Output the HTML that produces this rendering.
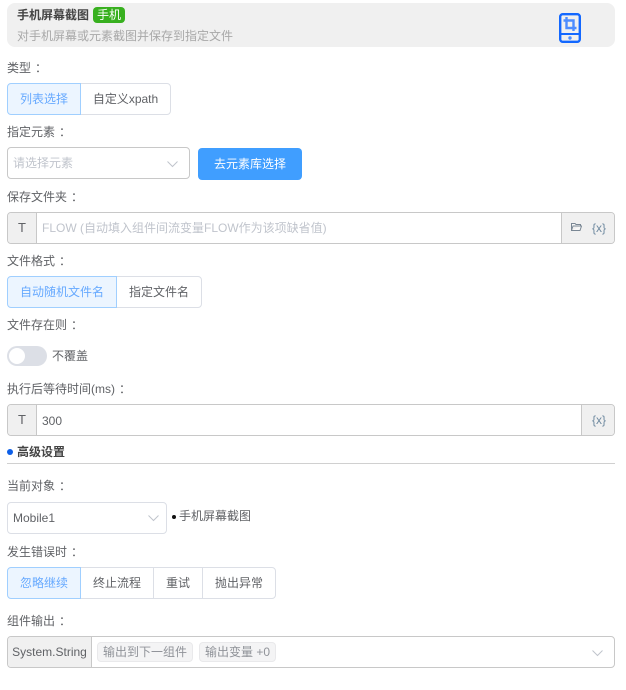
<!DOCTYPE html>
<html lang="zh-CN">
<head>
<meta charset="utf-8">
<style>
html,body{margin:0;padding:0;background:#fff;}
body{width:626px;height:690px;position:relative;overflow:hidden;font-family:"Liberation Sans","Noto Sans CJK SC",sans-serif;font-size:12px;color:#606266;}
.a{position:absolute;box-sizing:border-box;white-space:nowrap;}
.l{position:absolute;left:7px;height:16px;line-height:16px;color:#606266;white-space:nowrap;}
.c{position:relative;left:4px;}
.b{position:absolute;box-sizing:border-box;height:32px;line-height:30px;text-align:center;border:1px solid #dcdfe6;background:#fff;color:#606266;}
.on{background:#ecf5ff;border:1px solid #a0cfff;color:#66a9ff;}
.box{position:absolute;box-sizing:border-box;height:32px;border:1px solid #c8c8c8;border-radius:4px;background:#fff;left:7px;width:608px;overflow:hidden;}
.seg{position:absolute;top:0;height:30px;background:#f0f0f0;line-height:28px;text-align:center;box-sizing:border-box;color:#606266;}
.t{font-size:13px;line-height:29px;font-weight:normal;}
.x{font-size:12px;color:#6f8aa0;}
.sel{position:absolute;box-sizing:border-box;height:32px;border:1px solid #dcdfe6;border-radius:4px;background:#fff;line-height:30px;padding-left:5px;}
.tag{position:absolute;box-sizing:border-box;top:642px;height:20px;line-height:18px;background:#f4f4f5;border:1px solid #e9e9eb;border-radius:4px;color:#909399;text-align:center;}
</style>
</head>
<body>
<div class="a" style="left:7px;top:3px;width:608px;height:44px;background:#f0f0f0;border-radius:8px;"></div>
<div class="a" style="left:17px;top:7px;height:16px;line-height:16px;font-weight:bold;color:#444;">手机屏幕截图</div>
<div class="a" style="left:93px;top:7px;width:32px;height:16px;line-height:16px;background:#38b01f;color:#fff;border-radius:4px;text-align:center;">手机</div>
<div class="a" style="left:17px;top:28px;height:16px;line-height:16px;color:#a8a8a8;">对手机屏幕或元素截图并保存到指定文件</div>
<svg class="a" style="left:559px;top:13px;" width="22" height="30" viewBox="0 0 22 30" fill="none">
<rect x="1.2" y="1.2" width="19.6" height="27.6" rx="2.5" stroke="#1368ff" stroke-width="2.4"/>
<path d="M1 21H21" stroke="#1368ff" stroke-width="2"/>
<circle cx="11" cy="25" r="1.7" fill="#4d8dff"/>
<path d="M7.5 4V15H17.5M4.5 7.5H14.5V18" stroke="#4d8dff" stroke-width="2.4"/>
</svg>

<div class="l" style="top:60px;">类型<span class="c">：</span></div>
<div class="b" style="left:80px;top:83px;width:91px;border-radius:0 4px 4px 0;">自定义xpath</div>
<div class="b on" style="left:7px;top:83px;width:74px;border-radius:4px 0 0 4px;">列表选择</div>

<div class="l" style="top:124px;">指定元素<span class="c">：</span></div>
<div class="sel" style="left:7px;top:147px;width:183px;color:#c0c4cc;border-color:#c8c8c8;">请选择元素</div>
<svg class="a" style="left:167px;top:161px;" width="11" height="7" viewBox="0 0 11 7" fill="none"><path d="M.5 .5L5.5 5.5L10.5 .5" stroke="#c0c4cc" stroke-width="1"/></svg>
<div class="a" style="left:198px;top:148px;width:104px;height:32px;line-height:32px;background:#409eff;color:#fff;border-radius:4px;text-align:center;">去元素库选择</div>

<div class="l" style="top:189px;">保存文件夹<span class="c">：</span></div>
<div class="box" style="top:212px;">
  <div class="seg t" style="left:0;width:29px;border-right:1px solid #c8c8c8;">T</div>
  <div class="a" style="left:34px;top:0;line-height:30px;color:#c0c4cc;">FLOW (自动填入组件间流变量FLOW作为该项缺省值)</div>
  <div class="seg" style="left:553px;width:54px;border-left:1px solid #c8c8c8;"></div>
  <svg class="a" style="left:563px;top:9px;" width="11" height="10" viewBox="0 0 11 10" fill="none"><path d="M.5 8.5V1.5H4L5 2.5H9.5V4M.5 8.5H9L10.5 4H2L.5 8.5Z" stroke="#7a8794" stroke-width="1" fill="#f8f8f8"/></svg>
  <div class="a x" style="left:584px;top:0;line-height:30px;">{x}</div>
</div>

<div class="l" style="top:253px;">文件格式<span class="c">：</span></div>
<div class="b" style="left:116px;top:276px;width:86px;border-radius:0 4px 4px 0;">指定文件名</div>
<div class="b on" style="left:7px;top:276px;width:110px;border-radius:4px 0 0 4px;">自动随机文件名</div>

<div class="l" style="top:317px;">文件存在则<span class="c">：</span></div>
<div class="a" style="left:7px;top:346px;width:40px;height:20px;background:#dcdfe6;border-radius:10px;"></div>
<div class="a" style="left:9px;top:348px;width:16px;height:16px;background:#fff;border-radius:50%;"></div>
<div class="a" style="left:52px;top:348px;height:16px;line-height:16px;">不覆盖</div>

<div class="l" style="top:381px;">执行后等待时间(ms)<span class="c">：</span></div>
<div class="box" style="top:404px;">
  <div class="seg t" style="left:0;width:29px;border-right:1px solid #c8c8c8;">T</div>
  <div class="a" style="left:34px;top:0;line-height:32px;color:#606266;">300</div>
  <div class="seg" style="left:573px;width:34px;border-left:1px solid #c8c8c8;"></div>
  <div class="a x" style="left:584px;top:0;line-height:30px;">{x}</div>
</div>

<div class="a" style="left:7px;top:449px;width:6px;height:6px;background:#0d5fe8;border-radius:50%;"></div>
<div class="a" style="left:17px;top:444px;height:16px;line-height:16px;font-weight:bold;color:#444;">高级设置</div>
<div class="a" style="left:7px;top:463px;width:608px;height:1px;background:#d0d0d0;"></div>

<div class="l" style="top:478px;">当前对象<span class="c">：</span></div>
<div class="sel" style="left:7px;top:502px;width:160px;color:#606266;">Mobile1</div>
<svg class="a" style="left:148px;top:515px;" width="11" height="7" viewBox="0 0 11 7" fill="none"><path d="M.5 .5L5.5 5.5L10.5 .5" stroke="#c0c4cc" stroke-width="1"/></svg>
<div class="a" style="left:172px;top:515px;width:4px;height:4px;background:#111;border-radius:50%;"></div>
<div class="a" style="left:179px;top:508px;height:16px;line-height:16px;">手机屏幕截图</div>

<div class="l" style="top:544px;">发生错误时<span class="c">：</span></div>
<div class="b" style="left:80px;top:567px;width:74px;">终止流程</div>
<div class="b" style="left:153px;top:567px;width:50px;">重试</div>
<div class="b" style="left:202px;top:567px;width:74px;border-radius:0 4px 4px 0;">抛出异常</div>
<div class="b on" style="left:7px;top:567px;width:74px;border-radius:4px 0 0 4px;">忽略继续</div>

<div class="l" style="top:613px;">组件输出<span class="c">：</span></div>
<div class="box" style="top:636px;">
  <div class="seg" style="left:0;width:84px;border-right:1px solid #c8c8c8;line-height:30px;">System.String</div>
</div>
<div class="tag" style="left:97px;width:96px;">输出到下一组件</div>
<div class="tag" style="left:199px;width:77px;">输出变量 +0</div>
<svg class="a" style="left:592px;top:650px;" width="11" height="7" viewBox="0 0 11 7" fill="none"><path d="M.5 .5L5.5 5.5L10.5 .5" stroke="#c0c4cc" stroke-width="1"/></svg>
</body>
</html>
